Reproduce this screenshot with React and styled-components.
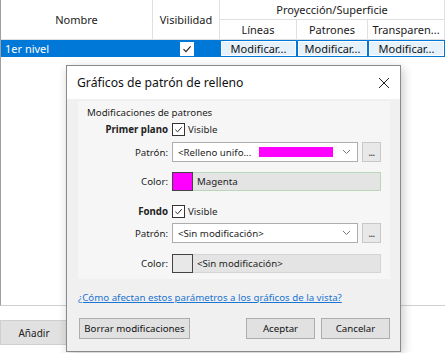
import styled, { createGlobalStyle } from 'styled-components'

const Global = createGlobalStyle`
  body { margin: 0; background: #fff; }
  * { box-sizing: border-box; }
`

const Screen = styled.div`
  position: relative;
  width: 445px;
  height: 353px;
  overflow: hidden;
  background: #fff;
  font-family: "Noto Sans", "Open Sans", sans-serif;
  font-size: 11px;
  color: #1e1e1e;
`

const ListFrame = styled.div`
  height: 306px;
  border-left: 1px solid #a0a0a0;
  border-bottom: 1px solid #d0d0d0;
`

const Grid = styled.div`
  display: grid;
  grid-template-columns: 152px 67px 77px 71px 1fr;
  grid-template-rows: 20px 20px 17px;
`

const HeadCell = styled.div`
  display: flex;
  align-items: center;
  justify-content: center;
  border-right: 1px solid #e0e0e0;
  border-bottom: 1px solid #e0e0e0;
  color: #1a1a1a;
  white-space: nowrap;
  overflow: hidden;
  grid-row: ${p => p.$row || 'auto'};
  grid-column: ${p => p.$col || 'auto'};
`

const RowCell = styled.div`
  background: #0078d7;
  display: flex;
  align-items: center;
  justify-content: ${p => (p.$left ? 'flex-start' : 'center')};
  padding: ${p => (p.$left ? '0 4px' : '1px')};
  color: #fff;
`

const RowCheck = styled.div`
  width: 14px;
  height: 14px;
  background: #fff;
  display: flex;
  align-items: center;
  justify-content: center;
`

const CellButton = styled.div`
  width: 100%;
  height: 100%;
  background: #e5f1fb;
  border: 1px solid #fff;
  color: #111;
  display: flex;
  align-items: center;
  justify-content: center;
  white-space: nowrap;
`

const AddButton = styled.div`
  margin-top: 14px;
  width: 68px;
  height: 25px;
  background: #e1e1e1;
  border: 1px solid #cfcfcf;
  display: flex;
  align-items: center;
  justify-content: center;
  color: #222;
  font-size: 10px;
`

/* floating dialog window over the table */
const Dialog = styled.div`
  position: absolute;
  left: 66px;
  top: 65px;
  width: 335px;
  height: 287px;
  background: #f0f0f0;
  border: 1px solid #8a8a8a;
  box-shadow: 2px 3px 10px rgba(0, 0, 0, 0.22);
  display: flex;
  flex-direction: column;
  font-size: 9.7px;
`

const TitleBar = styled.div`
  flex-shrink: 0;
  height: 33px;
  background: #fff;
  display: flex;
  align-items: center;
  justify-content: space-between;
  padding: 0 10px 0 10px;
  font-size: 12.2px;
  color: #111;
`

const Body = styled.div`
  flex: 1;
  padding: 2px 10px 0 11px;
  display: flex;
  flex-direction: column;
`

const Group = styled.div`
  background: #f6f6f6;
  padding: 3px 0 6px 0;
`

const GroupTitle = styled.div`
  padding-left: 9px;
  height: 17px;
  display: flex;
  align-items: center;
`

const Form = styled.div`
  display: grid;
  grid-template-columns: 90px 186px 19px;
  column-gap: 4px;
  align-items: center;
`

const Label = styled.div`
  font-weight: ${p => (p.$bold ? 700 : 400)};
  color: #222;
  height: ${p => p.$h || 20}px;
  display: flex;
  align-items: center;
  justify-content: flex-end;
  margin-top: ${p => p.$mt || 0}px;
`

const CheckLine = styled.div`
  grid-column: 2 / 4;
  display: flex;
  align-items: center;
  gap: 3px;
  height: 17px;
  margin-top: ${p => p.$mt || 0}px;
`

const Box = styled.div`
  width: 13px;
  height: 13px;
  border: 1px solid #333;
  background: #fff;
  display: flex;
  align-items: center;
  justify-content: center;
`

const Select = styled.div`
  height: 20px;
  margin-top: ${p => p.$mt || 0}px;
  background: #fff;
  border: 1px solid #adadad;
  display: flex;
  align-items: center;
  padding: 0 6px 0 5px;
  gap: 4px;
`

const SelectText = styled.span`
  white-space: nowrap;
`

const FillBar = styled.div`
  flex: 1;
  height: 10px;
  background: #ff00ff;
  margin: 0 5px 0 4px;
`

const Chevron = styled.div`
  margin-left: auto;
  display: flex;
`

const DotsButton = styled.div`
  height: 20px;
  margin-top: ${p => p.$mt || 0}px;
  background: #e8e8e8;
  border: 1px solid #c8c8c8;
  display: flex;
  align-items: center;
  justify-content: center;
  font-size: 9px;
  font-weight: 700;
  color: #555;
  letter-spacing: -0.5px;
`

const ColorField = styled.div`
  grid-column: 2 / 4;
  height: 19px;
  margin-top: ${p => p.$mt || 0}px;
  background: #e4e4e4;
  border: 1px solid ${p => (p.$active ? '#b8d8b8' : '#d4d4d4')};
  display: flex;
  align-items: center;
  gap: 4px;
`

const Swatch = styled.div`
  width: 21px;
  height: 19px;
  margin: -1px 0 -1px -1px;
  background: ${p => p.$color};
  border: 1px solid #444;
`

const Link = styled.a`
  margin-top: 11px;
  height: 14px;
  display: flex;
  align-items: center;
  color: #1a74d0;
  text-decoration: underline;
  white-space: nowrap;
`

const Buttons = styled.div`
  margin-top: 14px;
  display: flex;
  gap: 6px;
  padding-left: 1px;
`

const Button = styled.div`
  height: 21px;
  width: ${p => p.$w}px;
  background: #e1e1e1;
  border: 1px solid #adadad;
  display: flex;
  align-items: center;
  justify-content: center;
  white-space: nowrap;
  color: #111;
  margin-left: ${p => p.$push || 0}px;
`

const Check = ({ size = 10 }) => (
  <svg width={size} height={size} viewBox="0 0 10 10">
    <path d="M1.5 5.2 L4 7.6 L8.6 2.4" fill="none" stroke="#222" strokeWidth="1.1" />
  </svg>
)

const Caret = () => (
  <Chevron>
    <svg width="9" height="6" viewBox="0 0 9 6">
      <path d="M1 1 L4.5 4.5 L8 1" fill="none" stroke="#777" strokeWidth="1" />
    </svg>
  </Chevron>
)

export default function App () {
  return (
    <Screen>
      <Global />
      <ListFrame>
        <Grid>
          <HeadCell $row="1 / 3" $col="1">Nombre</HeadCell>
          <HeadCell $row="1 / 3" $col="2">Visibilidad</HeadCell>
          <HeadCell $row="1" $col="3 / 6">Proyección/Superficie</HeadCell>
          <HeadCell $row="2" $col="3">Líneas</HeadCell>
          <HeadCell $row="2" $col="4">Patrones</HeadCell>
          <HeadCell $row="2" $col="5">Transparen...</HeadCell>
          <RowCell $left>1er nivel</RowCell>
          <RowCell><RowCheck><Check /></RowCheck></RowCell>
          <RowCell><CellButton>Modificar...</CellButton></RowCell>
          <RowCell><CellButton>Modificar...</CellButton></RowCell>
          <RowCell><CellButton>Modificar...</CellButton></RowCell>
        </Grid>
      </ListFrame>
      <AddButton>Añadir</AddButton>

      <Dialog>
        <TitleBar>
          <span>Gráficos de patrón de relleno</span>
          <svg width="12" height="12" viewBox="0 0 12 12">
            <path d="M1 1 L11 11 M11 1 L1 11" stroke="#222" strokeWidth="1" />
          </svg>
        </TitleBar>
        <Body>
          <Group>
            <GroupTitle>Modificaciones de patrones</GroupTitle>
            <Form>
              <Label $bold $h={17}>Primer plano</Label>
              <CheckLine><Box><Check size={9} /></Box>Visible</CheckLine>

              <Label $mt={4}>Patrón:</Label>
              <Select $mt={4}>
                <SelectText>&lt;Relleno unifo...</SelectText>
                <FillBar />
                <Caret />
              </Select>
              <DotsButton $mt={4}>...</DotsButton>

              <Label $mt={10} $h={19}>Color:</Label>
              <ColorField $mt={10} $active>
                <Swatch $color="#ff00ff" />
                Magenta
              </ColorField>

              <Label $bold $h={17} $mt={12}>Fondo</Label>
              <CheckLine $mt={12}><Box><Check size={9} /></Box>Visible</CheckLine>

              <Label $mt={3}>Patrón:</Label>
              <Select $mt={3}>
                <SelectText>&lt;Sin modificación&gt;</SelectText>
                <Caret />
              </Select>
              <DotsButton $mt={3}>...</DotsButton>

              <Label $mt={11} $h={19}>Color:</Label>
              <ColorField $mt={11}>
                <Swatch $color="#e8e8e8" />
                &lt;Sin modificación&gt;
              </ColorField>
            </Form>
          </Group>
          <Link href="#">¿Cómo afectan estos parámetros a los gráficos de la vista?</Link>
          <Buttons>
            <Button $w={111}>Borrar modificaciones</Button>
            <Button $w={69} $push={50}>Aceptar</Button>
            <Button $w={69}>Cancelar</Button>
          </Buttons>
        </Body>
      </Dialog>
    </Screen>
  )
}
